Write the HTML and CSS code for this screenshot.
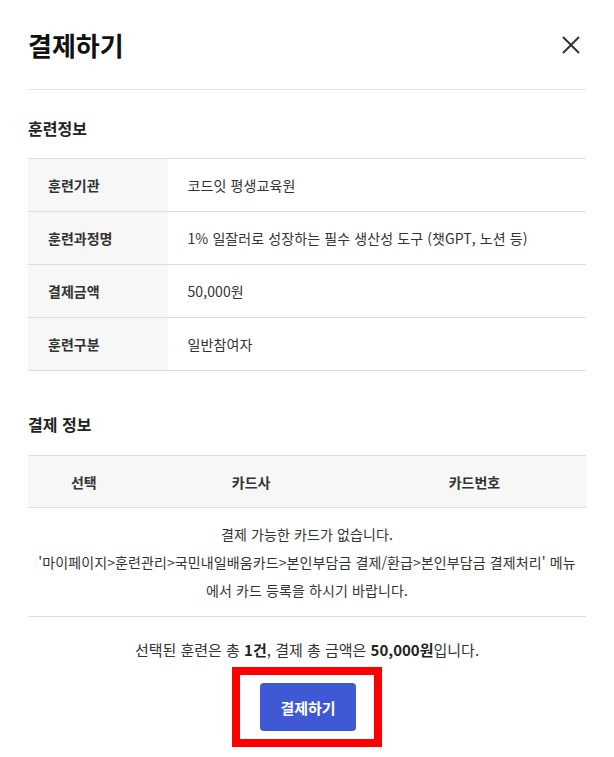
FILE: index.html
```html
<!DOCTYPE html>
<html lang="ko">
<head>
  <meta charset="UTF-8" />
  <meta name="viewport" content="width=device-width, initial-scale=1.0"/>
  <title>결제하기</title>
  <link rel="stylesheet" href="styles.css">
</head>
<body>
  <div class="modal">
    <div class="modal-header">
      <h2>결제하기</h2>
      <button class="close-btn" aria-label="닫기">
        <svg width="18" height="18" viewBox="0 0 18 18">
          <path d="M1 1 L17 17 M17 1 L1 17" stroke="#333" stroke-width="2" fill="none"/>
        </svg>
      </button>
    </div>

    <h3 class="section-title">훈련정보</h3>
    <table class="info-table">
      <tr>
        <th>훈련기관</th>
        <td>코드잇 평생교육원</td>
      </tr>
      <tr>
        <th>훈련과정명</th>
        <td>1% 일잘러로 성장하는 필수 생산성 도구 (챗GPT, 노션 등)</td>
      </tr>
      <tr>
        <th>결제금액</th>
        <td>50,000원</td>
      </tr>
      <tr>
        <th>훈련구분</th>
        <td>일반참여자</td>
      </tr>
    </table>

    <h3 class="section-title second">결제 정보</h3>
    <table class="card-table">
      <thead>
        <tr>
          <th class="col-select">선택</th>
          <th class="col-company">카드사</th>
          <th class="col-number">카드번호</th>
        </tr>
      </thead>
      <tbody>
        <tr>
          <td colspan="3" class="empty">
            결제 가능한 카드가 없습니다.<br>
            '마이페이지&gt;훈련관리&gt;국민내일배움카드&gt;본인부담금 결제/환급&gt;본인부담금 결제처리' 메뉴<br>
            에서 카드 등록을 하시기 바랍니다.
          </td>
        </tr>
      </tbody>
    </table>

    <p class="summary">선택된 훈련은 총 <b>1건</b>, 결제 총 금액은 <b>50,000원</b>입니다.</p>

    <div class="action">
      <div class="highlight">
        <button class="pay-btn">결제하기</button>
      </div>
    </div>
  </div>
</body>
</html>
```

FILE: styles.css
```css
body {
  margin: 0;
  font-family: "Noto Sans CJK KR", "Noto Sans", sans-serif;
  color: #333;
  background: #fff;
}

.modal {
  padding: 0 28px;
}

.modal-header {
  display: flex;
  justify-content: space-between;
  align-items: center;
  height: 89px;
  border-bottom: 1px solid #e5e5e5;
}

.modal-header h2 {
  margin: 0;
  font-size: 26px;
  font-weight: 700;
  color: #111;
}

.close-btn {
  border: none;
  background: none;
  padding: 0;
  margin-right: 6px;
  cursor: pointer;
  display: flex;
}

.section-title {
  margin: 27px 0 19px;
  font-size: 16px;
  line-height: 22px;
  font-weight: 700;
  color: #222;
}

.section-title.second {
  margin-top: 42px;
  margin-bottom: 20px;
}

table {
  width: 100%;
  border-collapse: collapse;
  font-size: 14px;
}

.info-table th,
.info-table td {
  height: 52px;
  padding: 0 20px;
  border-top: 1px solid #ddd;
  border-bottom: 1px solid #ddd;
  text-align: left;
}

.info-table th {
  width: 25%;
  box-sizing: border-box;
  background: #f7f7f7;
  font-weight: 700;
}

.info-table td {
  font-weight: 400;
  letter-spacing: 0.1px;
}

.card-table th {
  height: 49px;
  background: #f7f7f7;
  border-top: 1px solid #ddd;
  border-bottom: 1px solid #ddd;
  font-weight: 700;
}

.col-select {
  width: 20%;
}

.col-company,
.col-number {
  width: 40%;
}

.card-table .empty {
  padding: 12px 0;
  line-height: 28px;
  text-align: center;
  border-bottom: 1px solid #ddd;
  letter-spacing: 0.1px;
}

.summary {
  margin: 22px 0 6px;
  text-align: center;
  font-size: 15px;
  line-height: 22px;
}

.summary b {
  color: #222;
}

.action {
  display: flex;
  justify-content: center;
}

.highlight {
  border: 8px solid #ff0000;
  padding: 8px 18px 8px 20px;
}

.pay-btn {
  display: block;
  width: 96px;
  height: 48px;
  border: none;
  border-radius: 4px;
  background: #3f59d4;
  color: #fff;
  font-family: inherit;
  font-size: 15px;
  font-weight: 700;
  cursor: pointer;
}
```
